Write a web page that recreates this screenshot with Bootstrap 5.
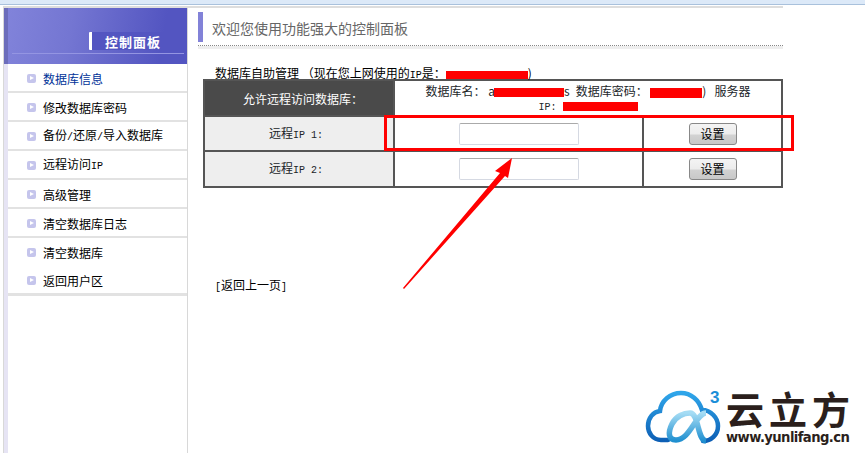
<!DOCTYPE html>
<html lang="zh"><head><meta charset="utf-8"><title>控制面板</title>
<link href="https://cdn.jsdelivr.net/npm/bootstrap@5.3.0/dist/css/bootstrap.min.css" rel="stylesheet">
<style>
html,body{height:453px;overflow:hidden;background:#fff}
body{position:relative;font:12px/14px "Noto Sans CJK SC","Liberation Sans",sans-serif;color:#000}
.topstrip{height:5px;background:#dce9f8;border-bottom:1px solid #a9c1dc}
.shell{margin:1px 0 0 3px;width:780px;border-top:2px solid #ddd;height:447px}
.sidebar{width:185px;flex:none;border-left:1px solid #d8d8d8;border-right:1px solid #d8d8d8;background:linear-gradient(#e6e4f4,#e6e4f4) left/4px 100% no-repeat #fff}
.side-head{height:56px;background:linear-gradient(100deg,#8183da 0%,#7476d2 35%,#5355c1 85%);border-left:4px solid #6c6dbb;position:relative;padding:24px 0 0 81px}
.side-title{border-left:3px solid #fff;border-radius:1px;height:18px;padding-left:13px;color:#fff;font-weight:700;font-size:13px;line-height:19px;letter-spacing:1px;background:#5355c1;white-space:nowrap}
.side-rule{height:1px;background:#9495e2;margin:3px 3px 0 -77px}
.side-list{margin-left:4px;border-radius:0;background:transparent}
.side-item{height:29px;padding:2px 0 0 19px;border:0;border-bottom:2px solid #e2e2e2;border-radius:0!important;display:flex;align-items:center;gap:7px;font-size:12px;color:#000;background:#fff}
.side-item.plain{border-bottom-color:#fff}
.side-item.last{border-bottom:3px solid #e2e2e2}
.side-item.on{color:#003399}
.tick{width:9px;height:9px;background:#c5c5ec;border-radius:2px;position:relative;flex:none;margin-top:-1px}
.tick::after{content:"";position:absolute;left:3px;top:2px;border-left:4px solid #fff;border-top:2.5px solid transparent;border-bottom:2.5px solid transparent}
.lat{font-family:"Liberation Mono",monospace;font-size:10px}
.main-col{flex:1;min-width:0;padding:4px 0 0 10px}
.page-title{height:30px;border-left:5px solid #8282d8;padding:4px 0 0 9px;font-size:14px;line-height:24px;color:#666}
.title-rule{margin:3px 0 0 0;border-top:1px dotted #888;height:4px;background:#eee;background-clip:padding-box}
.caption-line{margin:16px 0 0 17px;height:14px;line-height:15px;white-space:nowrap}
.blot{display:inline-block;background:#f00;vertical-align:middle}
.blot-ip{width:82px;height:8px}
.blot-name{width:70px;height:9px;margin-left:-1px}
.blot-pass{width:52px;height:10px}
.blot-host{width:75px;height:9px}
.gap-after{margin-right:6px}
.ip-table{width:580px;margin:0 0 0 5px;border-collapse:separate;border-spacing:0;border:2px solid #555;table-layout:fixed;--bs-table-bg:transparent}
.col-a{width:190px}
.col-b{width:249px}
.ip-table td{padding:0;text-align:center;vertical-align:middle;border:0;border-right:2px solid #555;border-bottom:2px solid #555;height:35px}
.ip-table tr:first-child td{height:34px}
.ip-table tr:last-child td{border-bottom:0;height:34px}
.ip-table td:last-child{border-right:0}
.ip-table td.lbl{background:#eee;box-shadow:none;padding:1px 6px 0 0}
.ip-table td.dark{background:#4a4a4a;color:#fff;font-size:12px;padding:2px 0 0 8px}
.ip-table td.info{vertical-align:top;line-height:14px;padding:3px 28px 0 28px}
.ip-input{width:120px;height:22px;padding:0 3px;border:1px solid #d5d9e2;border-top-color:#aaa;border-radius:2px;margin:0 auto;display:block;box-shadow:none}
.set-btn{width:48px;height:22px;padding:0;font-size:12px;line-height:18px;color:#000;border:1px solid #888;border-radius:3px;background:linear-gradient(#f4f4f4 0%,#ececec 50%,#d2d2d2 55%,#c8c8c8 100%)}
.backlink{margin:90px 0 0 17px;line-height:14px}
.redbox{position:absolute;left:384px;top:115px;width:410px;height:36px;border:3px solid #f00}
.arrow{position:absolute;left:395px;top:150px}
.logo{position:absolute;left:640px;top:385px;width:225px;height:68px}
.logo svg{position:absolute;left:0;top:0}
.logo-cn{position:absolute;left:86px;top:4px;font:700 38px/38px "Noto Sans CJK SC",sans-serif;color:#2b1f1c;letter-spacing:5px;white-space:nowrap}
.logo-url{position:absolute;left:86px;top:45px;font:700 13.2px/16px "DejaVu Sans",sans-serif;color:#2b1f1c;letter-spacing:-.6px;white-space:nowrap}
.logo-three{position:absolute;left:70px;top:4px;font:700 17px/17px "Liberation Sans",sans-serif;color:#1b8ed8}
</style></head>
<body>
<div class="topstrip"></div>
<div class="shell d-flex">
  <nav class="sidebar">
    <div class="side-head">
      <div class="side-title">控制面板</div>
      <div class="side-rule"></div>
    </div>
    <div class="list-group side-list">
      <a class="list-group-item side-item on"><i class="tick"></i>数据库信息</a>
      <a class="list-group-item side-item"><i class="tick"></i>修改数据库密码</a>
      <a class="list-group-item side-item"><i class="tick"></i><span>备份<span class="lat">/</span>还原<span class="lat">/</span>导入数据库</span></a>
      <a class="list-group-item side-item"><i class="tick"></i><span>远程访问<span class="lat">IP</span></span></a>
      <a class="list-group-item side-item"><i class="tick"></i>高级管理</a>
      <a class="list-group-item side-item"><i class="tick"></i>清空数据库日志</a>
      <a class="list-group-item side-item plain"><i class="tick"></i>清空数据库</a>
      <a class="list-group-item side-item last"><i class="tick"></i>返回用户区</a>
    </div>
  </nav>
  <main class="main-col">
    <div class="page-title">欢迎您使用功能强大的控制面板</div>
    <div class="title-rule"></div>
    <div class="caption-line">数据库自助管理 （现在您上网使用的<span class="lat">IP</span>是：<span class="blot blot-ip"></span>)</div>
    <table class="table ip-table mb-0">
      <colgroup><col class="col-a"><col class="col-b"><col></colgroup>
      <tr>
        <td class="dark">允许远程访问数据库：</td>
        <td class="info" colspan="2">数据库名： a<span class="blot blot-name"></span><span class="gap-after">s</span>数据库密码： <span class="blot blot-pass"></span>)&nbsp;&nbsp; 服务器<br><span class="lat">IP: </span><span class="blot blot-host"></span></td>
      </tr>
      <tr>
        <td class="lbl">远程<span class="lat">IP 1:</span></td>
        <td><input class="form-control ip-input" type="text"></td>
        <td><button class="btn set-btn" type="button">设置</button></td>
      </tr>
      <tr>
        <td class="lbl">远程<span class="lat">IP 2:</span></td>
        <td><input class="form-control ip-input" type="text"></td>
        <td><button class="btn set-btn" type="button">设置</button></td>
      </tr>
    </table>
    <div class="backlink"><span class="lat">[</span>返回上一页<span class="lat">]</span></div>
  </main>
</div>
<div class="redbox"></div>
<svg class="arrow" width="125" height="145" viewBox="395 150 125 145"><polygon fill="#f00" points="512,158 495,171 500,173 403,288 404,289 505,176 508,178"/></svg>
<div class="logo">
  <svg width="90" height="68" viewBox="640 385 90 68">
    <defs><linearGradient id="cg" x1="0" y1="0" x2="0" y2="1"><stop offset="0" stop-color="#2fa6ea"/><stop offset="1" stop-color="#0d5fb5"/></linearGradient>
    <linearGradient id="ag" x1="0" y1="0" x2="0" y2="1"><stop offset="0" stop-color="#a5dcf4"/><stop offset="1" stop-color="#1f8fd0"/></linearGradient></defs>
    <path fill="none" stroke="url(#cg)" stroke-width="4.5" stroke-linecap="round" d="M668 440H661C653 440 648 433 648 426C648 418 653 412 660 411C661 401 670 393 681 393C691 393 699 400 702 410C711 410 718 418 718 426C718 435 711 441 703 441"/>
    <path fill="none" stroke="url(#ag)" stroke-width="5.5" d="M706 413C696 413 690 440 676 440C668 440 668 432 672 424C676 416 684 413 690 413C699 413 697 440 706 441"/>
  </svg>
  <span class="logo-three">3</span>
  <span class="logo-cn">云立方</span>
  <span class="logo-url">www.yunlifang.cn</span>
</div>
<script src="https://cdn.jsdelivr.net/npm/bootstrap@5.3.0/dist/js/bootstrap.bundle.min.js"></script>
</body></html>
